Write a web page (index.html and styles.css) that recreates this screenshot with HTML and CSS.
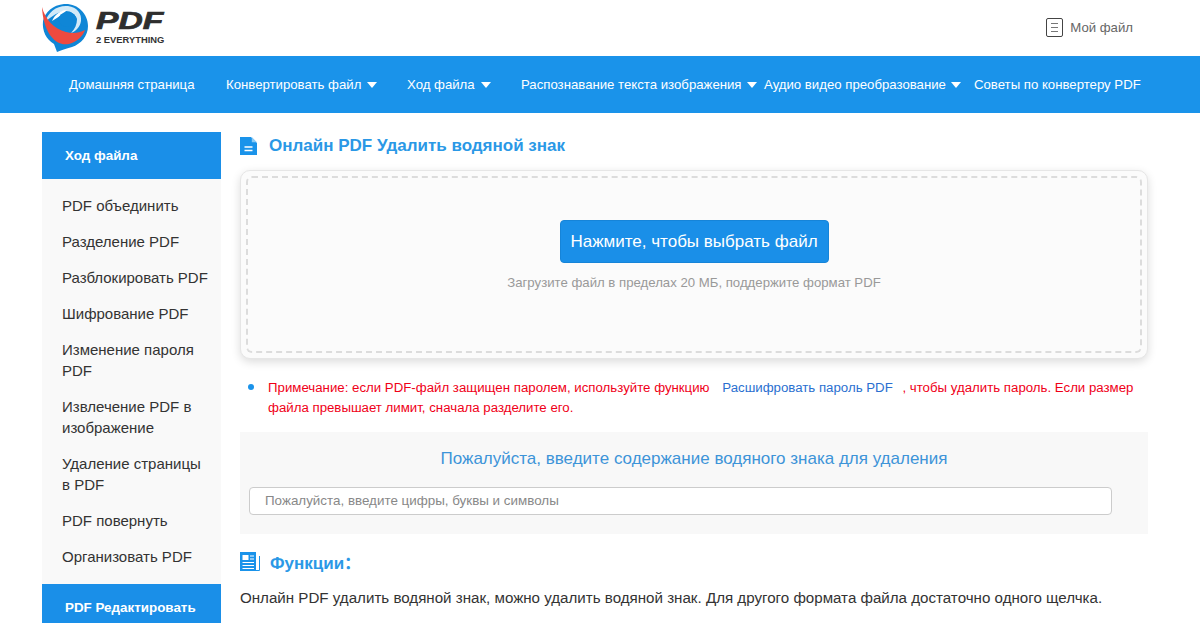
FILE: index.html
```html
<!DOCTYPE html>
<html lang="ru">
<head>
<meta charset="utf-8">
<title>Онлайн PDF Удалить водяной знак</title>
<link rel="stylesheet" href="styles.css">
</head>
<body>
<header class="top">
  <a class="logo">
    <svg class="logo-mark" width="50" height="50" viewBox="0 0 50 50">
      <path d="M24 1C37 0 48 10 48 23C48 33 41 41 32 44C26 46 21 47 17 49L14 41C6 36 2 28 3 18C5 9 13 2 24 1Z" fill="#0f86d6"/>
      <path d="M5 19C8 9 17 2 28 3C37 4 42 11 41 18C40 24 36 28 31 30C35 26 37 21 37 16C35 11 31 8 26 8C19 8 12 13 5 19Z" fill="#d3eaf8"/>
      <path d="M12 18C15 11 21 7 27 7C24 10 19 14 12 18Z" fill="#ffffff"/>
      <ellipse cx="27.500" cy="16.500" rx="9" ry="7.500" fill="#0f86d6"/>
      <path d="M2 4C5 16 14 26 26 29C33 31 39 30 45 27C43 33 37 39 29 41C14 44 3 27 2 4Z" fill="#ee4a3f"/>
    </svg>
    <span class="logo-text">
      <span class="logo-pdf">PDF</span>
      <span class="logo-sub">2 EVERYTHING</span>
    </span>
  </a>
  <a class="myfile">
    <svg width="17" height="19" viewBox="0 0 17 19"><rect x="0.5" y="0.5" width="16" height="18" rx="1.500" fill="none" stroke="#444"/><path d="M5 5.500H12M5 9.500H12M5 13.500H12" stroke="#777" stroke-width="1.200"/></svg>
    <span>Мой файл</span>
  </a>
</header>

<nav class="nav">
  <a class="nav-item home">Домашняя страница</a>
  <a class="nav-item conv">Конвертировать файл<i class="caret"></i></a>
  <a class="nav-item flow">Ход файла<i class="caret"></i></a>
  <a class="nav-item ocr">Распознавание текста изображения<i class="caret tight"></i></a>
  <a class="nav-item av">Аудио видео преобразование<i class="caret tight"></i></a>
  <a class="nav-item tips">Советы по конвертеру PDF</a>
</nav>

<div class="layout">
  <aside class="side">
    <h3 class="side-head">Ход файла</h3>
    <ul class="side-list">
      <li>PDF объединить</li>
      <li>Разделение PDF</li>
      <li>Разблокировать PDF</li>
      <li>Шифрование PDF</li>
      <li>Изменение пароля PDF</li>
      <li>Извлечение PDF в изображение</li>
      <li>Удаление страницы в PDF</li>
      <li>PDF повернуть</li>
      <li>Организовать PDF</li>
    </ul>
    <h3 class="side-head">PDF Редактировать</h3>
  </aside>

  <main class="main">
    <h2 class="title">
      <svg class="title-icon" width="17" height="18" viewBox="0 0 17 18"><path d="M0 0H11L17 6V18H0Z" fill="#1a93ea"/><path d="M11.800 0L17 5.200H11.800Z" fill="#8ccbf5"/><path d="M4.500 10H12.500M4.500 13.500H12.500" stroke="#fff" stroke-width="1.500"/></svg>
      <span>Онлайн PDF Удалить водяной знак</span>
    </h2>

    <section class="upload">
      <div class="dash">
        <button class="pick">Нажмите, чтобы выбрать файл</button>
        <p class="hint">Загрузите файл в пределах 20 МБ, поддержите формат PDF</p>
      </div>
    </section>

    <div class="note">
      <i class="dot"></i>
      <p class="note-text"><span>Примечание: если PDF-файл защищен паролем, используйте функцию</span> <a class="note-link">Расшифровать пароль PDF</a> <span>, чтобы удалить пароль. Если размер</span><br><span>файла превышает лимит, сначала разделите его.</span></p>
    </div>

    <section class="wm">
      <h4 class="wm-title">Пожалуйста, введите содержание водяного знака для удаления</h4>
      <input class="wm-input" type="text" placeholder="Пожалуйста, введите цифры, буквы и символы">
    </section>

    <h2 class="feat">
      <svg width="20" height="19" viewBox="0 0 20 19"><path d="M0 0H16V19H0Z" fill="#1a93ea"/><path d="M19.500 4V18.500H16" fill="none" stroke="#1a93ea" stroke-width="1"/><rect x="2.500" y="3" width="6" height="5" fill="#fff"/><path d="M10 4H14M10 7H14M2.500 10.500H14M2.500 13.500H14M2.500 16.500H14" stroke="#fff" stroke-width="1.200"/></svg>
      <span>Функции：</span>
    </h2>
    <p class="desc">Онлайн PDF удалить водяной знак, можно удалить водяной знак. Для другого формата файла достаточно одного щелчка.</p>
  </main>
</div>
</body>
</html>
```

FILE: styles.css
```css
* { box-sizing: border-box; }
html, body { margin: 0; height: 623px; overflow: hidden; }
body { font-family: "Liberation Sans", Arial, "Noto Sans CJK SC", sans-serif; color: #333; background: #fff; }
a { text-decoration: none; }

.top { height: 56px; display: flex; justify-content: space-between; align-items: center; padding: 0 67px 0 40px; }
.logo { display: flex; align-items: center; gap: 6px; }
.logo-mark { display: block; }
.logo-text { display: flex; flex-direction: column; }
.logo-pdf { font-size: 24px; line-height: 20px; font-weight: 700; font-style: italic; color: #2e2e2e; -webkit-text-stroke: 0.7px #2e2e2e; transform: scaleX(1.400); transform-origin: left center; }
.logo-sub { font-size: 9.400px; line-height: 13px; margin-top: 2px; font-weight: 700; color: #333; }
.myfile { display: flex; align-items: center; gap: 7px; font-size: 13.200px; color: #666; padding-bottom: 1px; }
.myfile svg { display: block; }

.nav { height: 57px; background: #1a93ea; display: flex; align-items: center; color: #fff; font-size: 13.200px; padding-left: 69px; }
.nav-item { display: flex; align-items: center; white-space: nowrap; color: #fff; }
.home { width: 157px; }
.conv { width: 181px; }
.flow { width: 114px; }
.ocr { width: 243px; }
.av { width: 210px; }
.caret { width: 0; height: 0; margin-left: 6px; border-left: 5.500px solid transparent; border-right: 5.500px solid transparent; border-top: 6px solid #fff; }
.tight { margin-left: 5px; }

.layout { display: flex; gap: 19px; padding: 19px 0 0 42px; align-items: flex-start; }
.side { width: 179px; flex: none; }
.side-head { margin: 0; height: 47px; background: #1a8fe8; color: #fff; font-size: 13.400px; font-weight: 700; line-height: 47px; padding-left: 23px; }
.side-list { list-style: none; margin: 0; padding: 8px 10px 10px 20px; background: #f9f9f9; font-size: 15px; line-height: 21px; color: #333; }
.side-list li { padding: 7.500px 0; }

.main { width: 908px; flex: none; }
.title { margin: 0; height: 38px; padding-top: 5px; display: flex; align-items: flex-start; gap: 12px; font-size: 17px; line-height: 18px; font-weight: 700; color: #2a98e6; }
.title-icon { display: block; }

.upload { height: 189px; padding: 5px; border: 1px solid #e6e6e6; border-radius: 10px; background: #fbfbfb; box-shadow: 0 3px 10px rgba(0,0,0,.14); }
.dash { height: 100%; border: 2px dashed #dcdcdc; border-radius: 6px; display: flex; flex-direction: column; align-items: center; padding-top: 42px; }
.pick { width: 269px; height: 43px; border: 1px solid #1684d8; border-radius: 4px; background: #1a8fe8; color: #fff; font-family: inherit; font-size: 17px; padding: 0; }
.hint { margin: 12px 0 0; font-size: 13.200px; line-height: 16px; color: #999; }

.note { margin: 19px 0 0; padding-left: 8px; display: flex; align-items: flex-start; gap: 14px; }
.dot { flex: none; width: 6px; height: 6px; margin-top: 6px; border-radius: 50%; background: #1a93ea; }
.note-text { margin: 0; font-size: 13.250px; line-height: 20px; color: #f00018; }
.note-link { color: #2a6fd0; margin: 0 6px 0 9px; }

.wm { margin-top: 14px; height: 102px; background: #f8f8f8; padding: 16px 9px 0; }
.wm-title { margin: 0 0 18px; font-size: 17px; font-weight: 400; line-height: 21px; text-align: center; color: #3d94d8; }
.wm-input { display: block; width: 863px; height: 28px; border: 1px solid #ccc; border-radius: 4px; background: #fff; padding: 0 15px 2px; font-family: inherit; font-size: 13.400px; color: #333; outline: 0; }
.wm-input::placeholder { color: #888; opacity: 1; }

.feat { margin: 18px 0 0; height: 19px; display: flex; align-items: center; gap: 10px; font-size: 17px; font-weight: 700; color: #2a98e6; }
.feat svg { display: block; }
.desc { margin: 17px 0 0; font-size: 15.130px; line-height: 20px; color: #333; white-space: nowrap; }
```
